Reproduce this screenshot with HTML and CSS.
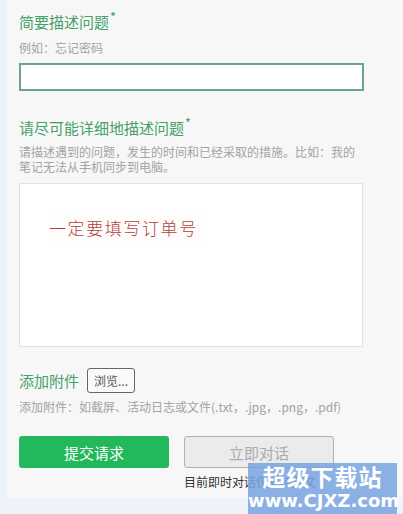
FILE: index.html
```html
<!DOCTYPE html>
<html lang="zh-CN">
<head>
    <meta charset="UTF-8">
    <meta name="viewport" content="width=device-width, initial-scale=1.0">
    <title>提交请求</title>
    <link rel="stylesheet" href="styles.css">
</head>
<body>
    <div class="panel">
        <div class="field">
            <label class="label">简要描述问题<sup>*</sup></label>
            <div class="hint">例如：忘记密码</div>
            <input type="text" class="subject">
        </div>

        <div class="field field-desc">
            <label class="label">请尽可能详细地描述问题<sup>*</sup></label>
            <div class="hint">请描述遇到的问题，发生的时间和已经采取的措施。比如：我的笔记无法从手机同步到电脑。</div>
            <div class="textarea">
                <span class="note">一定要填写订单号</span>
            </div>
        </div>

        <div class="field field-attach">
            <div class="attach-row">
                <label class="label">添加附件</label>
                <button class="browse">浏览...</button>
            </div>
            <div class="hint">添加附件：如截屏、活动日志或文件(.txt，.jpg，.png，.pdf)</div>
        </div>

        <div class="actions">
            <button class="btn btn-submit">提交请求</button>
            <div class="chat">
                <button class="btn btn-chat">立即对话</button>
                <div class="chat-note">目前即时对话仅支持英文</div>
            </div>
        </div>
    </div>

    <div class="watermark">
        <div class="wm-cn">超级下载站</div>
        <div class="wm-en">www.CJXZ.com</div>
    </div>
</body>
</html>
```

FILE: styles.css
```css
body {
    margin: 0;
    background-color: #eef2f9;
    font-family: 'Noto Sans CJK SC', 'Liberation Sans', sans-serif;
    color: #999;
    width: 403px;
    height: 514px;
    overflow: hidden;
    position: relative;
}

.panel {
    margin-left: 7px;
    height: 498px;
    box-sizing: border-box;
    background-color: #f7f7f7;
    padding: 12px 0 0 12px;
}

.field {
    display: flex;
    flex-direction: column;
    align-items: flex-start;
}

.label {
    font-size: 15px;
    line-height: 20px;
    color: #46a06a;
}

.label sup {
    font-size: 13px;
    line-height: 0;
    vertical-align: 6px;
    margin-left: 1px;
}

.hint {
    font-size: 12px;
    line-height: 15px;
    color: #a3a3a3;
    margin-top: 8px;
}

.subject {
    width: 345px;
    height: 28px;
    box-sizing: border-box;
    margin-top: 8px;
    border: 2px solid #6aa586;
    background-color: #fff;
    outline: none;
}

.field-desc {
    margin-top: 27px;
}

.field-desc .hint {
    width: 345px;
    margin-top: 6px;
}

.textarea {
    width: 344px;
    height: 164px;
    box-sizing: border-box;
    margin-top: 9px;
    border: 1px solid #e2e2e2;
    background-color: #fff;
    padding: 30px 0 0 28px;
}

.note {
    display: inline-block;
    font-size: 17px;
    font-weight: 300;
    line-height: 28px;
    letter-spacing: 1.6px;
    color: #b04040;
    background-color: #fffcfc;
    padding: 0 8px 0 1px;
}

.field-attach {
    margin-top: 21px;
}

.attach-row {
    display: flex;
    align-items: center;
    gap: 8px;
}

.browse {
    width: 48px;
    height: 25px;
    padding: 0;
    border: 1px solid #666;
    border-radius: 3px;
    background-color: #fafafa;
    font-family: inherit;
    font-size: 12px;
    color: #555;
}

.field-attach .hint {
    margin-top: 6px;
}

.actions {
    display: flex;
    gap: 15px;
    margin-top: 22px;
}

.btn {
    width: 150px;
    height: 32px;
    border-radius: 3px;
    font-family: inherit;
    font-size: 15px;
}

.btn-submit {
    background-color: #22b85b;
    border: none;
    color: #fff;
}

.btn-chat {
    background-color: #ebebeb;
    border: 1px solid #b0b0b0;
    color: #aaa;
}

.chat-note {
    font-size: 12px;
    line-height: 16px;
    color: #333;
    margin-top: 6px;
}

.watermark {
    position: absolute;
    left: 248px;
    top: 463px;
    width: 149px;
    height: 51px;
    background-color: rgba(120, 165, 225, 0.85);
    color: #fff;
    text-align: center;
    font-weight: bold;
}

.wm-cn {
    font-size: 23px;
    line-height: 26px;
    letter-spacing: 1px;
}

.wm-en {
    font-family: 'DejaVu Sans', sans-serif;
    font-size: 18px;
    line-height: 24px;
}
```
